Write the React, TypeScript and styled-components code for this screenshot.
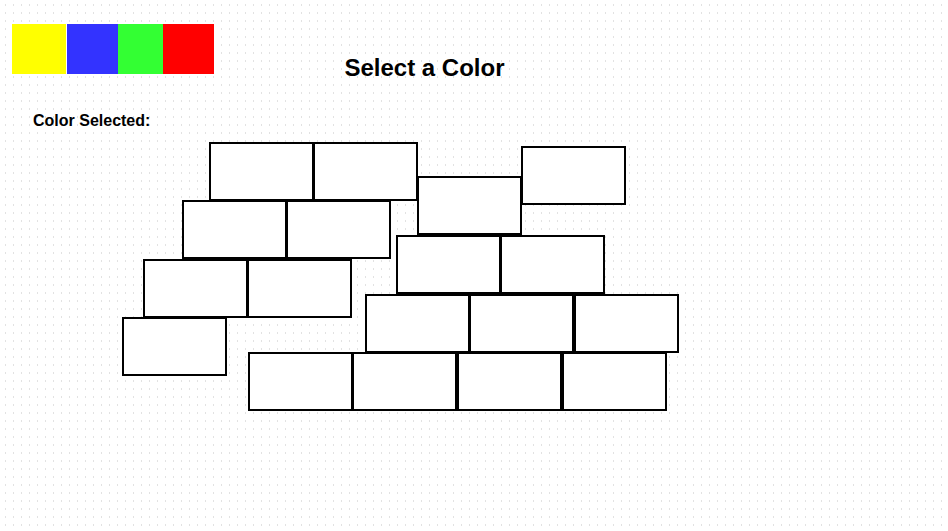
import styled, { createGlobalStyle } from "styled-components";

const GlobalStyle = createGlobalStyle`
  html,
  body {
    margin: 0;
    padding: 0;
  }

  body {
    font-family: "Liberation Sans", Arial, sans-serif;
    color: #000;
    background-color: #fff;
    /* faint dotted grid: a 1x2 dot every 8px */
    background-image: linear-gradient(
        to right,
        #fff 5px,
        transparent 5px,
        transparent 6px,
        #fff 6px
      ),
      linear-gradient(
        to bottom,
        #fff 4px,
        #e2e2e2 4px,
        #e2e2e2 6px,
        #fff 6px
      );
    background-size: 8px 8px;
  }
`;

const Page = styled.div`
  width: 948px;
  height: 531px;
  padding-top: 24px;
  box-sizing: border-box;
  overflow: hidden;
`;

const Header = styled.div`
  display: flex;
  align-items: flex-start;
`;

const Palette = styled.div`
  display: flex;
  margin-left: 12px;
  height: 50px;
`;

const Swatch = styled.button<{ $color: string; $width: number; $gap?: number }>`
  width: ${({ $width }) => $width}px;
  height: 100%;
  margin: 0 ${({ $gap }) => $gap ?? 0}px 0 0;
  padding: 0;
  border: none;
  background: ${({ $color }) => $color};
  cursor: pointer;
`;

const Title = styled.h2`
  flex: 1;
  margin: 30px 0 0;
  padding-right: 313px;
  font-size: 24px;
  line-height: 28px;
  font-weight: bold;
  text-align: center;
`;

const Label = styled.div`
  margin: 30px 0 0 33px;
  font-size: 16px;
  line-height: 18px;
  font-weight: bold;
`;

const Board = styled.div`
  position: relative;
  margin-top: 12px;
  height: 272px;
`;

const Brick = styled.div<{ $x: number; $y: number }>`
  position: absolute;
  left: ${({ $x }) => $x}px;
  top: ${({ $y }) => $y - 142}px;
  width: 105px;
  height: 59px;
  box-sizing: border-box;
  border: 2px solid #000;
  background: #fff;
`;

const colors = [
  { color: "#ffff00", width: 54, gap: 1 },
  { color: "#3333ff", width: 51 },
  { color: "#33ff33", width: 45 },
  { color: "#ff0000", width: 51 },
];

const bricks = [
  [209, 142],
  [313, 142],
  [521, 146],
  [417, 176],
  [182, 200],
  [286, 200],
  [396, 235],
  [500, 235],
  [143, 259],
  [247, 259],
  [365, 294],
  [469, 294],
  [574, 294],
  [122, 317],
  [248, 352],
  [352, 352],
  [457, 352],
  [562, 352],
];

export default function App() {
  return (
    <>
      <GlobalStyle />
      <Page>
        <Header>
          <Palette>
            {colors.map((c) => (
              <Swatch
                key={c.color}
                $color={c.color}
                $width={c.width}
                $gap={c.gap}
              />
            ))}
          </Palette>
          <Title>Select a Color</Title>
        </Header>
        <Label>Color Selected:</Label>
        <Board>
          {bricks.map(([x, y], i) => (
            <Brick key={i} $x={x} $y={y} />
          ))}
        </Board>
      </Page>
    </>
  );
}
